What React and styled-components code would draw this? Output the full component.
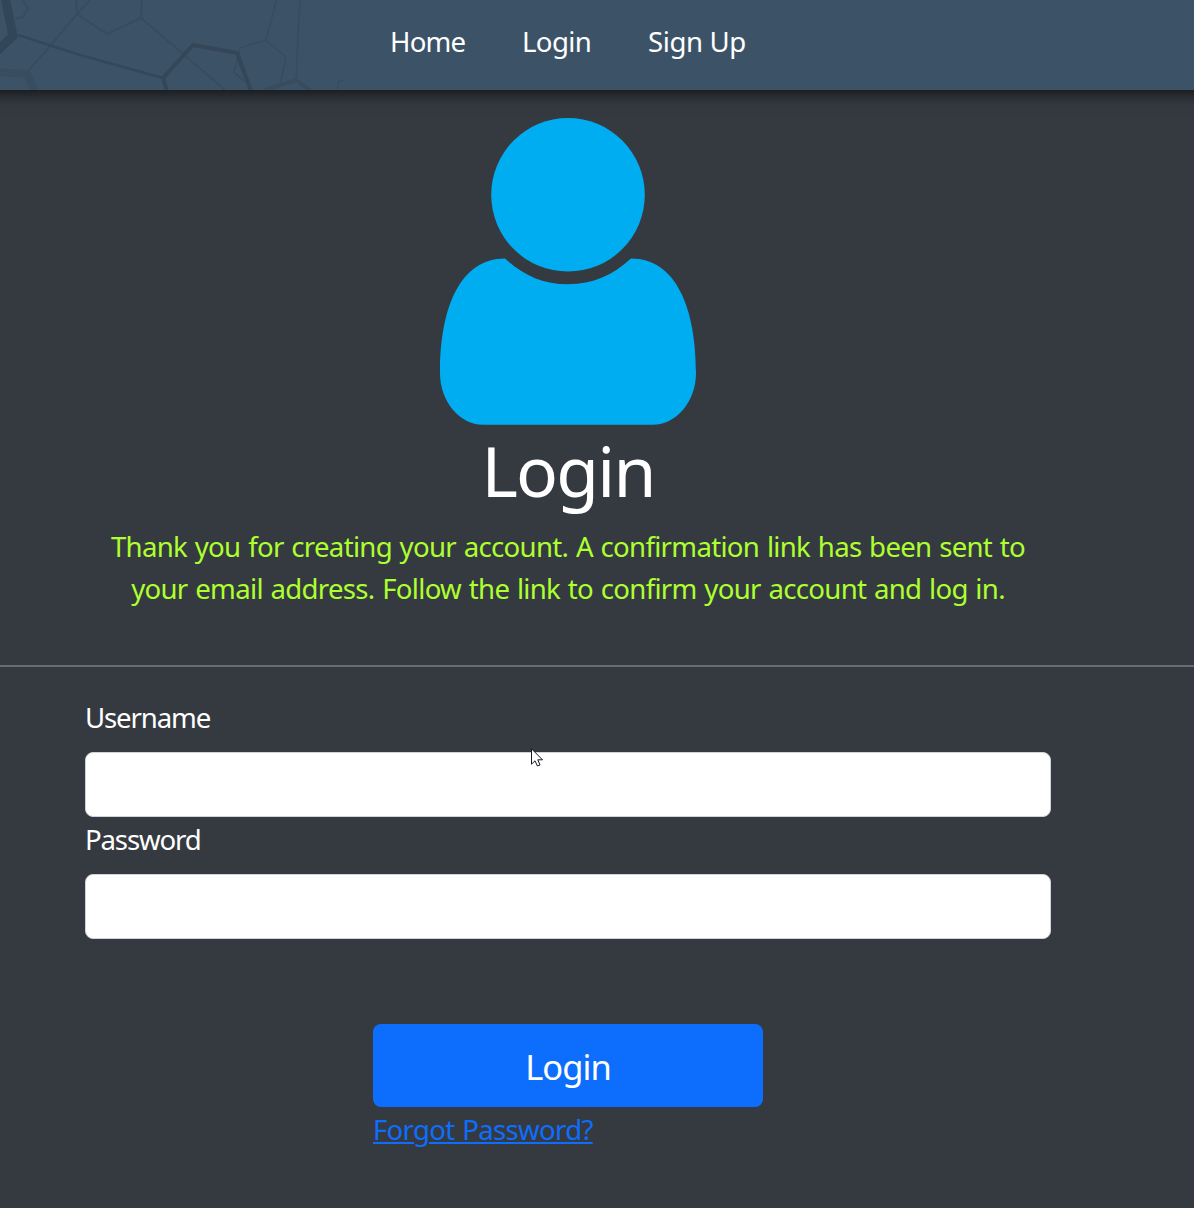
import React from "react";
import styled, { createGlobalStyle } from "styled-components";

const GlobalStyle = createGlobalStyle`
  *, *::before, *::after { box-sizing: border-box; }
  body {
    margin: 0;
    background: #353a41;
    color: #fff;
    font-family: "Segoe UI", "Noto Sans", "Open Sans", sans-serif;
    font-size: 27.6px;
    line-height: 42px;
  }
`;

const Page = styled.div`
  position: relative;
  min-height: 1208px;
  overflow: hidden;
`;

const Header = styled.header`
  display: grid;
  height: 90px;
  background: #3c5367;
  box-shadow: 0 -20px 16px 22px rgba(0, 0, 0, 0.8);
  > * { grid-area: 1 / 1; }
`;

const Pattern = styled.svg`
  display: block;
  fill: none;
`;

const Nav = styled.nav`
  display: flex;
  padding: 20px 0 0 390px;
`;

const NavLink = styled.a`
  flex: none;
  width: ${(p) => p.$width}px;
  color: #fff;
  text-decoration: none;
  white-space: nowrap;
  letter-spacing: ${(p) => p.$tracking || 0}px;
`;

const Column = styled.div`
  width: 1136px;
  display: flex;
  flex-direction: column;
  align-items: center;
`;

const Avatar = styled.svg`
  display: block;
  margin-top: 28px;
  fill: #00adf0;
`;

const Title = styled.h1`
  margin: 3px 0 0;
  font-size: 69.5px;
  line-height: 84px;
  font-weight: 400;
  letter-spacing: -1.8px;
`;

const Notice = styled.p`
  margin: 13px 0 0;
  color: #adff2f;
  text-align: center;
  letter-spacing: -0.7px;
  word-spacing: 1.2px;
`;

const NoticeLine = styled.span`
  display: block;
  white-space: nowrap;
`;

const Divider = styled.hr`
  margin: 56px 0 29px;
  height: 2px;
  border: 0;
  background: #696d71;
`;

const Form = styled.form`
  display: flex;
  flex-direction: column;
  width: 1136px;
  padding: 0 85px;
`;

const Label = styled.label`
  height: 42px;
  margin: 0 0 14px;
  letter-spacing: -1.15px;
`;

const Input = styled.input`
  display: block;
  height: 65px;
  margin-bottom: 1px;
  padding: 10px 20px;
  border: 1px solid #ced4da;
  border-radius: 8px;
  background: #fff;
  font: inherit;
  outline: 0;
`;

const Actions = styled.div`
  display: flex;
  flex-direction: column;
  align-items: flex-start;
  align-self: center;
  width: 390px;
  margin-top: 84px;
`;

const Submit = styled.button`
  width: 100%;
  height: 83px;
  padding: 2px 0 0;
  border: 0;
  border-radius: 8px;
  background: #0d6efd;
  color: #fff;
  font: inherit;
  font-size: 34.5px;
  letter-spacing: -0.95px;
`;

const Forgot = styled.a`
  margin-top: 1px;
  color: #0d6efd;
  text-decoration: underline;
  text-decoration-thickness: 2px;
  text-underline-offset: 2px;
  white-space: nowrap;
  letter-spacing: -0.7px;
  word-spacing: 1.2px;
`;

const Pointer = styled.svg`
  position: absolute;
  left: 531px;
  top: 748px;
`;

const navItems = [
  { text: "Home", width: 132, tracking: -0.8 },
  { text: "Login", width: 126, tracking: -0.6 },
  { text: "Sign Up", width: 100, tracking: -0.4 },
];

function Molecules() {
  return (
    <Pattern width="360" height="90" viewBox="0 0 360 90">
      <g stroke="#374c5f" strokeWidth="2">
        <path d="M92 -2 77 14 51 45 28 71M76 -2 77 14 107 34 141 18 142 -2M141 18 182 53 225 90" />
        <path d="M277 -2 266 40 240 48 234 72 245 82M266 40 286 57 280 85M300 -2 296 80M338 90 338 82 344 80" strokeWidth="1.5" />
        <path d="M22 0 28 8 23 17 15 19" />
        <path d="M265 90 296 80 311 91" strokeWidth="4" />
      </g>
      <path d="M-2 72 27 74 35 91" stroke="#384d60" strokeWidth="8" />
      <path d="M18 35 80 55 163 78" stroke="#33485a" strokeWidth="2.6" />
      <path d="M167 91 163 78 193 45 237 53 251 91" stroke="#334759" strokeWidth="4" />
      <path d="M5 -3 13 36 -3 51" stroke="#324659" strokeWidth="9" />
    </Pattern>
  );
}

export default function App() {
  return (
    <Page>
      <GlobalStyle />
      <Header>
        <Molecules />
        <Nav>
          {navItems.map((item) => (
            <NavLink key={item.text} $width={item.width} $tracking={item.tracking}>{item.text}</NavLink>
          ))}
        </Nav>
      </Header>
      <Column>
        <Avatar width="256" height="307" viewBox="0 0 256 307">
          <circle cx="128" cy="76.8" r="76.8" />
          <path d="M65 140.5C83 157 103 166.3 128 166.3S173 157 191 140.5C236 140.5 256 190 256 255C256 284 236 306.7 213 306.7H43C20 306.7 0 284 0 255C0 190 20 140.5 65 140.5Z" />
        </Avatar>
        <Title>Login</Title>
        <Notice>
          <NoticeLine>Thank you for creating your account. A confirmation link has been sent to</NoticeLine>
          <NoticeLine>your email address. Follow the link to confirm your account and log in.</NoticeLine>
        </Notice>
      </Column>
      <Divider />
      <Form>
        <Label htmlFor="username">Username</Label>
        <Input id="username" type="text" />
        <Label htmlFor="password">Password</Label>
        <Input id="password" type="password" />
        <Actions>
          <Submit type="button">Login</Submit>
          <Forgot>Forgot Password?</Forgot>
        </Actions>
      </Form>
      <Pointer width="13" height="20" viewBox="0 0 13 20">
        <path d="M.5 .8V16.2L4 12.8 6.4 18 9 17 6.8 11.8H11.5Z" fill="#fff" stroke="#15151f" strokeWidth="1" />
      </Pointer>
    </Page>
  );
}
